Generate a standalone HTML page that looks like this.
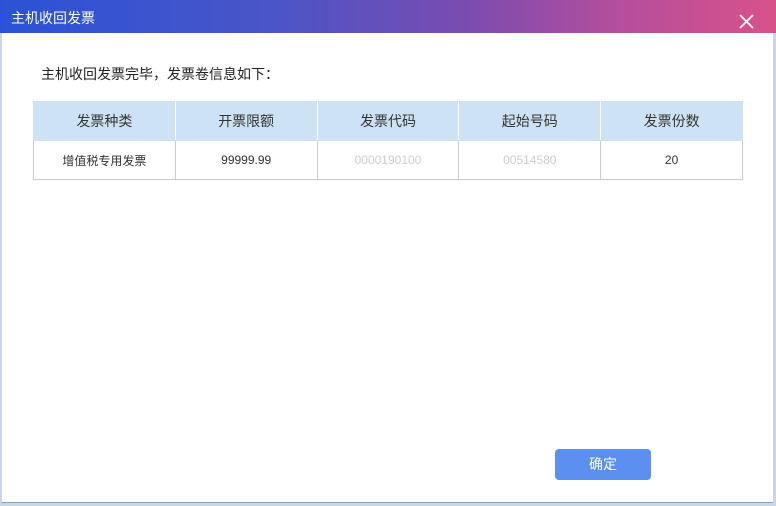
<!DOCTYPE html><html><head><meta charset="utf-8"><style>
body{margin:0;width:776px;height:506px;overflow:hidden;background:#c9d6e8;font-family:"Liberation Sans","Noto Sans CJK SC",sans-serif;position:relative}
.t{position:absolute;left:0;top:0;width:776px;height:33px;background:linear-gradient(90deg,#2b52d6 0%,#4a55c8 35%,#7a4cb0 60%,#b54e9c 80%,#d8528a 100%)}
.t span{position:absolute;left:11px;top:8px;color:#fff;font-size:14px}
.x{position:absolute;left:739px;top:14px;width:15px;height:15px}
.b{position:absolute;left:2px;top:33px;width:771px;height:469px;background:#fff;border-bottom:1px solid #8aa0c0}
.m{position:absolute;left:41px;top:64px;font-size:14px;color:#222}
table{position:absolute;left:33px;top:101px;width:710px;table-layout:fixed;border-collapse:collapse;font-size:14px;color:#333}
td{text-align:center;border:1px solid #c8ccd2;height:38px;padding:0}
tr.h td{background:#cde3f5;border-color:#cde3f5;border-right-color:#fff}
tr.h td:last-child{border-right-color:#cde3f5}
tr.r td{font-size:12px}
.btn{position:absolute;left:555px;top:449px;width:96px;height:31px;background:#5b8ff0;border-radius:4px;color:#fff;font-size:14px;text-align:center;line-height:31px}
</style></head><body>
<div class="t"><span>主机收回发票</span><svg class="x" viewBox="0 0 15 15"><path d="M1 1L14 14M14 1L1 14" stroke="#fff" stroke-width="1.8"/></svg></div>
<div class="b"></div>
<div class="m">主机收回发票完毕，发票卷信息如下：</div>
<table><tr class="h"><td>发票种类</td><td>开票限额</td><td>发票代码</td><td>起始号码</td><td>发票份数</td></tr>
<tr class="r"><td>增值税专用发票</td><td>99999.99</td><td style="color:#ccc">0000190100</td><td style="color:#ccc">00514580</td><td>20</td></tr></table>
<div class="btn">确定</div>
</body></html>
